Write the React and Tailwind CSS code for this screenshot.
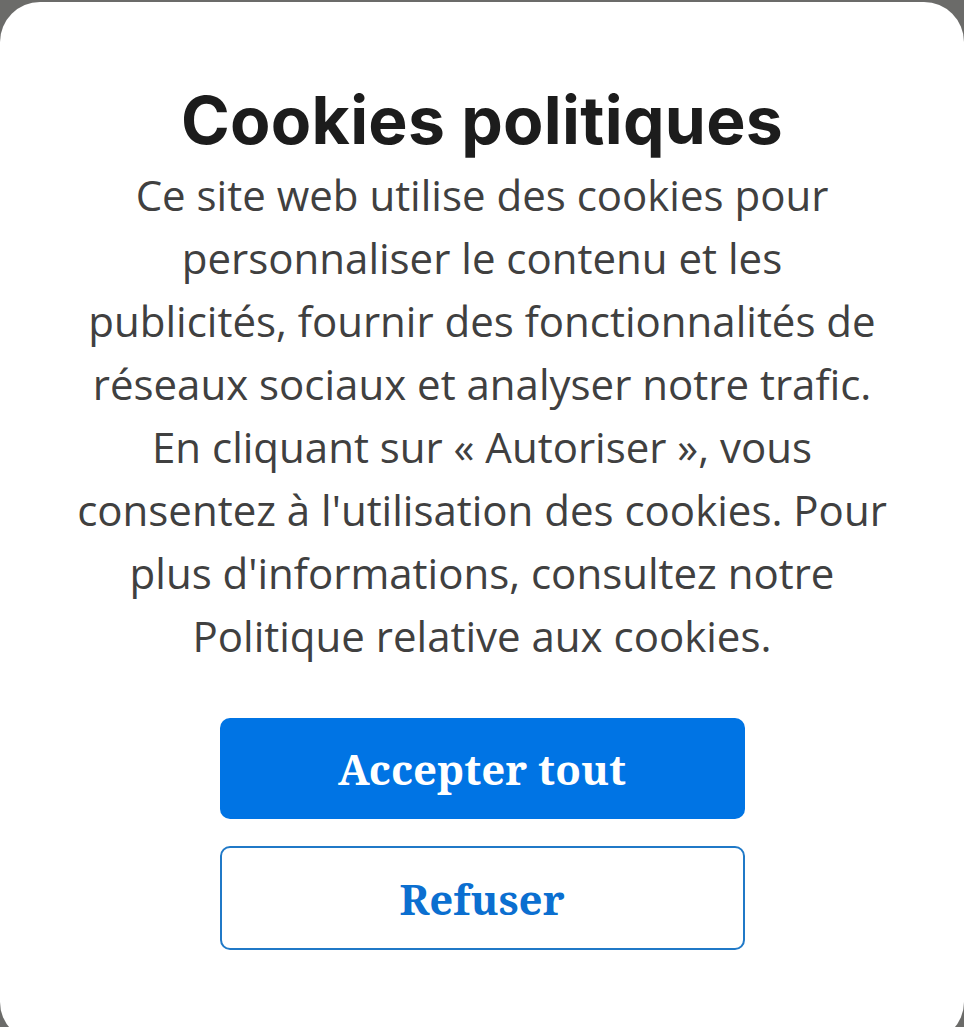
import React from 'react';

const lines = [
  'Ce site web utilise des cookies pour',
  'personnaliser le contenu et les',
  'publicités, fournir des fonctionnalités de',
  'réseaux sociaux et analyser notre trafic.',
  'En cliquant sur « Autoriser », vous',
  "consentez à l'utilisation des cookies. Pour",
  "plus d'informations, consultez notre",
  'Politique relative aux cookies.',
];

const CookieBanner = () => {
  return (
    <div className="min-h-screen bg-[#6b6b69] pt-[2px] overflow-hidden">
      <div className="flex h-[1040px] flex-col items-center rounded-[40px] bg-white pt-[80px]">
        <h1 className="text-[66px] font-bold leading-[76px] tracking-[0.3px] text-[#1c1c1c] [font-family:Inter,'Liberation_Sans',sans-serif]">
          Cookies politiques
        </h1>
        <p className="mt-[5px] w-[880px] text-center text-[42px] leading-[63px] text-[#404040] [font-family:'Open_Sans',sans-serif]">
          {lines.map((l, i) => (
            <React.Fragment key={i}>
              {l}
              {i < lines.length - 1 && <br />}
            </React.Fragment>
          ))}
        </p>
        <div className="mt-[51px] flex w-[525px] flex-col gap-[27px] [font-family:'Noto_Serif','DejaVu_Serif',serif]">
          <button className="h-[101px] rounded-[10px] bg-[#0074e4] text-[42px] font-bold text-white">
            Accepter tout
          </button>
          <button className="h-[104px] rounded-[10px] border-2 border-[#2079c7] bg-white text-[42px] font-bold text-[#0b6fd0]">
            Refuser
          </button>
        </div>
      </div>
    </div>
  );
};

export default function App() {
  return <CookieBanner />;
}
